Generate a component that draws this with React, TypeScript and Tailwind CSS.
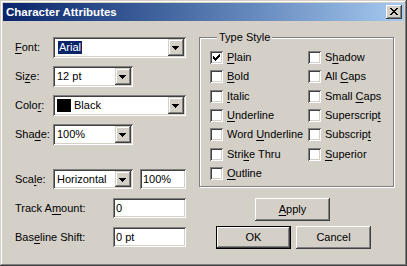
import type { ReactNode } from 'react';

const SUNKEN =
    'shadow-[inset_1px_1px_0_#808080,inset_-1px_-1px_0_#ffffff,inset_2px_2px_0_#404040,inset_-2px_-2px_0_#d4d0c8]';
const RAISED =
    'shadow-[inset_-1px_-1px_0_#404040,inset_1px_1px_0_#ffffff,inset_-2px_-2px_0_#808080,inset_2px_2px_0_#d4d0c8]';
const FRAME =
    'shadow-[inset_-1px_-1px_0_#404040,inset_1px_1px_0_#d4d0c8,inset_-2px_-2px_0_#808080,inset_2px_2px_0_#ffffff]';

// tiny pixel glyphs (classic windows marlett look)
const Pixels = ({ rows, color = '#000' }: { rows: string[]; color?: string }) => (
    <svg width={rows[0].length} height={rows.length} shapeRendering="crispEdges" className="block">
        {rows.map((r, y) =>
            r.split('').map((c, x) =>
                c === '#' ? <rect key={`${x}-${y}`} x={x} y={y} width="1" height="1" fill={color} /> : null
            )
        )}
    </svg>
);

const CHECK = ['......#', '.....##', '#...###', '##.###.', '#####..', '.###...', '..#....'];
const CLOSE = ['##....##', '.##..##.', '..####..', '...##...', '..####..', '.##..##.', '##....##'];
const DOWN = ['#######', '.#####.', '..###..', '...#...'];

const U = ({ children }: { children: ReactNode }) => (
    <span className="underline decoration-1 underline-offset-[2px]">{children}</span>
);

const DropButton = () => (
    <div className={`w-4 h-full shrink-0 bg-[#d4d0c8] pl-[4px] pt-[7px] ${FRAME}`}>
        <Pixels rows={DOWN} />
    </div>
);

const Combo = ({ className, children }: { className: string; children: ReactNode }) => (
    <div className={`flex h-[21px] bg-white p-[2px] ${SUNKEN} ${className}`}>
        <div className="flex-1 flex items-center min-w-0 pl-[2px]">{children}</div>
        <DropButton />
    </div>
);

const TextBox = ({ className, value }: { className: string; value: string }) => (
    <div className={`flex items-center h-[20px] bg-white pl-[3px] ${SUNKEN} ${className}`}>{value}</div>
);

const CheckBox = ({ label, checked }: { label: ReactNode; checked?: boolean }) => (
    <div className="flex items-center">
        <span className={`w-[13px] h-[13px] shrink-0 bg-white pl-[3px] pt-[3px] ${SUNKEN}`}>
            {checked && <Pixels rows={CHECK} />}
        </span>
        <span className="ml-[4px] whitespace-nowrap">{label}</span>
    </div>
);

const Button = ({ children, isDefault, className = '' }: { children: ReactNode; isDefault?: boolean; className?: string }) =>
    isDefault ? (
        <div className={`w-[75px] h-[23px] border border-black ${className}`}>
            <div className={`w-full h-full flex items-center justify-center bg-[#d4d0c8] ${RAISED}`}>{children}</div>
        </div>
    ) : (
        <div className={`w-[75px] h-[23px] flex items-center justify-center bg-[#d4d0c8] ${RAISED} ${className}`}>
            {children}
        </div>
    );

export default function App() {
    return (
        <div
            className={`w-[407px] h-[266px] p-[3px] flex flex-col bg-[#d4d0c8] text-black text-[11px] leading-[13px] font-['Liberation_Sans',Arial,sans-serif] ${FRAME}`}
        >
            {/* Title bar */}
            <div className="h-[18px] shrink-0 flex items-center pl-[3px] pr-[2px] bg-gradient-to-r from-[#0a246a] to-[#a6caf0]">
                <span className="flex-1 text-white font-bold text-[11.5px]">Character Attributes</span>
                <div className={`w-[16px] h-[14px] bg-[#d4d0c8] pl-[4px] pt-[3px] ${RAISED}`}>
                    <Pixels rows={CLOSE} />
                </div>
            </div>

            <div className="flex-1 flex pl-[12px]">
                {/* Left column */}
                <div className="w-[171px] flex flex-col pt-[16px]">
                    <div className="flex items-center">
                        <span className="w-[38px]"><U>F</U>ont:</span>
                        <Combo className="w-[133px]">
                            <span className="ml-[1px] px-[1px] bg-[#0a246a] text-white">Arial</span>
                        </Combo>
                    </div>
                    <div className="flex items-center mt-[8px]">
                        <span className="w-[38px]">Si<U>z</U>e:</span>
                        <Combo className="w-[80px]">12 pt</Combo>
                    </div>
                    <div className="flex items-center mt-[8px]">
                        <span className="w-[38px]">Colo<U>r</U>:</span>
                        <Combo className="w-[133px]">
                            <span className="w-[14px] h-[13px] bg-black mr-[3px]" />
                            Black
                        </Combo>
                    </div>
                    <div className="flex items-center mt-[8px]">
                        <span className="w-[38px]">Sha<U>d</U>e:</span>
                        <Combo className="w-[80px]">100%</Combo>
                    </div>
                    <div className="flex items-center mt-[24px]">
                        <span className="w-[38px]">Sca<U>l</U>e:</span>
                        <Combo className="w-[80px] !h-[20px]">Horizontal</Combo>
                        <TextBox className="w-[46px] ml-[7px]" value="100%" />
                    </div>
                    <div className="flex items-center mt-[9px]">
                        <span className="w-[98px]">Track A<U>m</U>ount:</span>
                        <TextBox className="w-[73px]" value="0" />
                    </div>
                    <div className="flex items-center mt-[9px]">
                        <span className="w-[98px]">Bas<U>e</U>line Shift:</span>
                        <TextBox className="w-[73px]" value="0 pt" />
                    </div>
                </div>

                {/* Right column */}
                <div className="ml-[13px] w-[195px] flex flex-col pt-[10px]">
                    <fieldset className="border border-[#808080] shadow-[inset_1px_1px_0_#ffffff,1px_1px_0_#ffffff] pl-[10px] pt-[4px] pb-[3px]">
                        <legend className="ml-[7px] px-[2px] bg-[#d4d0c8]">Type Style</legend>
                        <div className="grid grid-cols-[98px_1fr] grid-flow-col grid-rows-[repeat(7,19.33px)]">
                            <CheckBox checked label={<><U>P</U>lain</>} />
                            <CheckBox label={<><U>B</U>old</>} />
                            <CheckBox label={<><U>I</U>talic</>} />
                            <CheckBox label={<><U>U</U>nderline</>} />
                            <CheckBox label={<>Word <U>U</U>nderline</>} />
                            <CheckBox label={<>Stri<U>k</U>e Thru</>} />
                            <CheckBox label={<><U>O</U>utline</>} />
                            <CheckBox label={<>S<U>h</U>adow</>} />
                            <CheckBox label={<>All <U>C</U>aps</>} />
                            <CheckBox label={<>Small <U>C</U>aps</>} />
                            <CheckBox label={<>Superscrip<U>t</U></>} />
                            <CheckBox label={<>Subscrip<U>t</U></>} />
                            <CheckBox label={<><U>S</U>uperior</>} />
                        </div>
                    </fieldset>
                    <Button className="ml-[56px] mt-[11px]"><U>A</U>pply</Button>
                    <div className="flex gap-[5px] ml-[17px] mt-[5px]">
                        <Button isDefault>OK</Button>
                        <Button>Cancel</Button>
                    </div>
                </div>
            </div>
        </div>
    );
}
